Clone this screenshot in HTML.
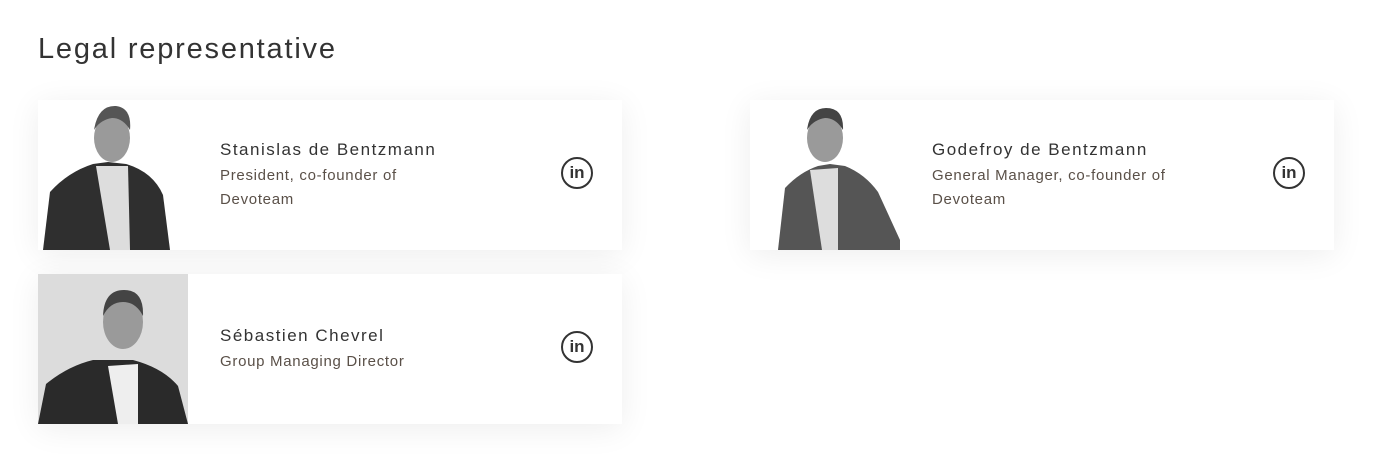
<!DOCTYPE html>
<html><head><style>
body{margin:0;background:#fff;font-family:"Liberation Sans",sans-serif;width:1392px;height:454px;overflow:hidden;position:relative}
h1{position:absolute;left:38px;top:33px;margin:0;font-weight:400;font-size:29px;color:#333;letter-spacing:1.8px}
.card{position:absolute;width:584px;height:150px;background:#fff;box-shadow:0 5px 30px rgba(0,0,0,.07)}
.ph{position:absolute;left:0;top:0;width:150px;height:150px;overflow:hidden}
.txt{position:absolute;left:182px;top:38px;width:300px;white-space:nowrap}
.n{font-size:17px;color:#333;line-height:24px;letter-spacing:1.5px}
.r{font-size:15px;color:#5a5048;line-height:24px;margin-top:2px;letter-spacing:.7px}
.li{position:absolute;left:523px;top:57px;width:28px;height:28px;border:2px solid #333;border-radius:50%;font-weight:700;font-size:17px;color:#333;text-align:center;line-height:28px}
</style></head><body>
<h1>Legal representative</h1>

<div class="card" style="left:38px;top:100px">
 <div class="ph"><svg width="150" height="150"><path d="M5 150 L12 92 Q30 72 55 64 L70 62 L88 64 Q115 72 125 95 L132 150 Z" fill="#2f2f2f"/><path d="M58 66 L72 150 L92 150 L90 66 Z" fill="#ddd"/><ellipse cx="74" cy="38" rx="18" ry="24" fill="#9a9a9a"/><path d="M56 30 Q60 5 78 6 Q94 8 92 30 Q85 18 74 18 Q62 20 56 30Z" fill="#555"/></svg></div>
 <div class="txt"><div class="n">Stanislas de Bentzmann</div><div class="r">President, co-founder of<br>Devoteam</div></div>
 <div class="li">in</div>
</div>

<div class="card" style="left:750px;top:100px">
 <div class="ph"><svg width="150" height="150"><path d="M28 150 L35 88 Q50 72 68 66 L80 64 L95 66 Q115 74 128 92 L150 140 L150 150 Z" fill="#555"/><path d="M60 70 L72 150 L88 150 L88 68 Z" fill="#ddd"/><ellipse cx="75" cy="38" rx="18" ry="24" fill="#9a9a9a"/><path d="M57 30 Q60 8 76 8 Q94 8 93 30 Q86 18 75 18 Q63 20 57 30Z" fill="#444"/></svg></div>
 <div class="txt"><div class="n">Godefroy de Bentzmann</div><div class="r">General Manager, co-founder of<br>Devoteam</div></div>
 <div class="li">in</div>
</div>

<div class="card" style="left:38px;top:274px">
 <div class="ph" style="background:#dcdcdc"><svg width="150" height="150"><path d="M0 150 L8 110 Q30 92 55 86 L95 86 Q125 94 140 112 L150 150 Z" fill="#2a2a2a"/><path d="M70 92 L80 150 L100 150 L100 90 Z" fill="#eee"/><ellipse cx="85" cy="48" rx="20" ry="27" fill="#9a9a9a"/><path d="M65 42 Q66 16 86 16 Q106 16 105 42 Q98 28 85 28 Q72 28 65 42Z" fill="#444"/></svg></div>
 <div class="txt" style="top:50px"><div class="n">Sébastien Chevrel</div><div class="r">Group Managing Director</div></div>
 <div class="li">in</div>
</div>
</body></html>
